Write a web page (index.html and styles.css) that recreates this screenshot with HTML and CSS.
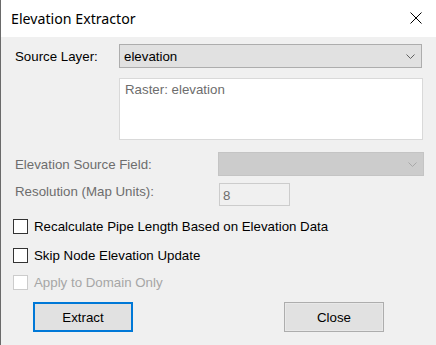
FILE: index.html
```html
<!DOCTYPE html>
<html lang="en">
<head>
    <meta charset="UTF-8">
    <title>Elevation Extractor</title>
    <link rel="stylesheet" href="styles.css">
</head>
<body>
    <div class="window">
        <div class="titlebar">
            <span class="title">Elevation Extractor</span>
            <svg class="close-x" width="12" height="12" viewBox="0 0 12 12">
                <path d="M0.5 0.5 L11.5 11.5 M11.5 0.5 L0.5 11.5" stroke="#000" stroke-width="1" fill="none"/>
            </svg>
        </div>

        <div class="content">
            <div class="row source-row">
                <label class="label">Source Layer:</label>
                <div class="combo">
                    <span>elevation</span>
                    <svg class="chevron" width="9" height="5" viewBox="0 0 9 5">
                        <path d="M0.5 0.5 L4.5 4.5 L8.5 0.5" stroke="#606060" fill="none"/>
                    </svg>
                </div>
            </div>

            <div class="info-box">Raster: elevation</div>

            <div class="row field-row">
                <label class="label disabled">Elevation Source Field:</label>
                <div class="combo combo-disabled">
                    <svg class="chevron" width="9" height="5" viewBox="0 0 9 5">
                        <path d="M0.5 0.5 L4.5 4.5 L8.5 0.5" stroke="#a8a8a8" fill="none"/>
                    </svg>
                </div>
            </div>

            <div class="row res-row">
                <label class="label disabled">Resolution (Map Units):</label>
                <div class="num-input">8</div>
            </div>

            <div class="check first">
                <span class="box"></span>
                <span>Recalculate Pipe Length Based on Elevation Data</span>
            </div>
            <div class="check">
                <span class="box"></span>
                <span>Skip Node Elevation Update</span>
            </div>
            <div class="check check-disabled">
                <span class="box"></span>
                <span>Apply to Domain Only</span>
            </div>

            <div class="buttons">
                <button class="btn btn-default">Extract</button>
                <button class="btn">Close</button>
            </div>
        </div>
    </div>
</body>
</html>
```

FILE: styles.css
```css
body {
    margin: 0;
    padding: 0;
    width: 436px;
    height: 345px;
    overflow: hidden;
    background: #f0f0f0;
    font-family: 'Liberation Sans', Arial, sans-serif;
    font-size: 13.3px;
    color: #000000;
}

.window {
    height: 345px;
    border-left: 1px solid #6a6a6a;
    box-sizing: border-box;
}

.titlebar {
    height: 37px;
    background: #ffffff;
    display: flex;
    align-items: center;
    justify-content: space-between;
    padding: 0 14px 0 10px;
}
.title {
    font-family: 'Noto Sans', 'Open Sans', sans-serif;
    font-size: 14.2px;
    color: #000000;
    margin-top: -1px;
}
.close-x {
    display: block;
    margin-top: -1px;
}

.content {
    padding: 0 0 0 12px;
}

.row {
    display: flex;
    align-items: center;
}
.label {
    padding-left: 2px;
}
.disabled {
    color: #6d6d6d;
}

.source-row {
    margin-top: 7px;
}
.source-row .label {
    width: 104px;
}

.combo {
    height: 24px;
    box-sizing: border-box;
    border: 1px solid #adadad;
    background: #e1e1e1;
    display: flex;
    align-items: center;
    justify-content: space-between;
    padding: 0 6px 0 4px;
}
.source-row .combo {
    width: 303px;
}
.chevron {
    display: block;
}

.info-box {
    margin: 10px 0 0 106px;
    width: 304px;
    height: 62px;
    box-sizing: border-box;
    background: #ffffff;
    border: 1px solid #d9d9d9;
    color: #6d6d6d;
    padding: 3px 5px;
}

.field-row {
    margin-top: 12px;
}
.field-row .label {
    width: 203px;
}
.combo-disabled {
    width: 206px;
    background: #cccccc;
    border-color: #c4c4c4;
    justify-content: flex-end;
}

.res-row {
    margin-top: 7px;
    align-items: flex-start;
}
.res-row .label {
    width: 204px;
    padding-top: 1px;
}
.num-input {
    width: 71px;
    height: 23px;
    box-sizing: border-box;
    border: 1px solid #cccccc;
    color: #6d6d6d;
    padding: 4px 0 0 3px;
}

.check {
    display: flex;
    align-items: center;
    margin-top: 13px;
    height: 15px;
}
.check + .check {
    margin-top: 14px;
}
.check-disabled {
    color: #a6a6a6;
}
.check.check-disabled {
    margin-top: 12px;
}
.box {
    width: 15px;
    height: 15px;
    box-sizing: border-box;
    border: 1px solid #333333;
    background: #ffffff;
    margin-right: 6px;
}
.check-disabled .box {
    border-color: #cccccc;
}

.buttons {
    display: flex;
    margin: 12px 0 0 20px;
    gap: 151px;
}
.btn {
    width: 100px;
    height: 30px;
    box-sizing: border-box;
    font-family: 'Liberation Sans', Arial, sans-serif;
    font-size: 13.3px;
    color: #000000;
    background: #e1e1e1;
    border: 1px solid #adadad;
    box-shadow: inset 0 0 0 1px #e8e8e8;
    padding: 0;
}
.btn-default {
    border: 2px solid #0078d7;
    box-shadow: none;
}
```
